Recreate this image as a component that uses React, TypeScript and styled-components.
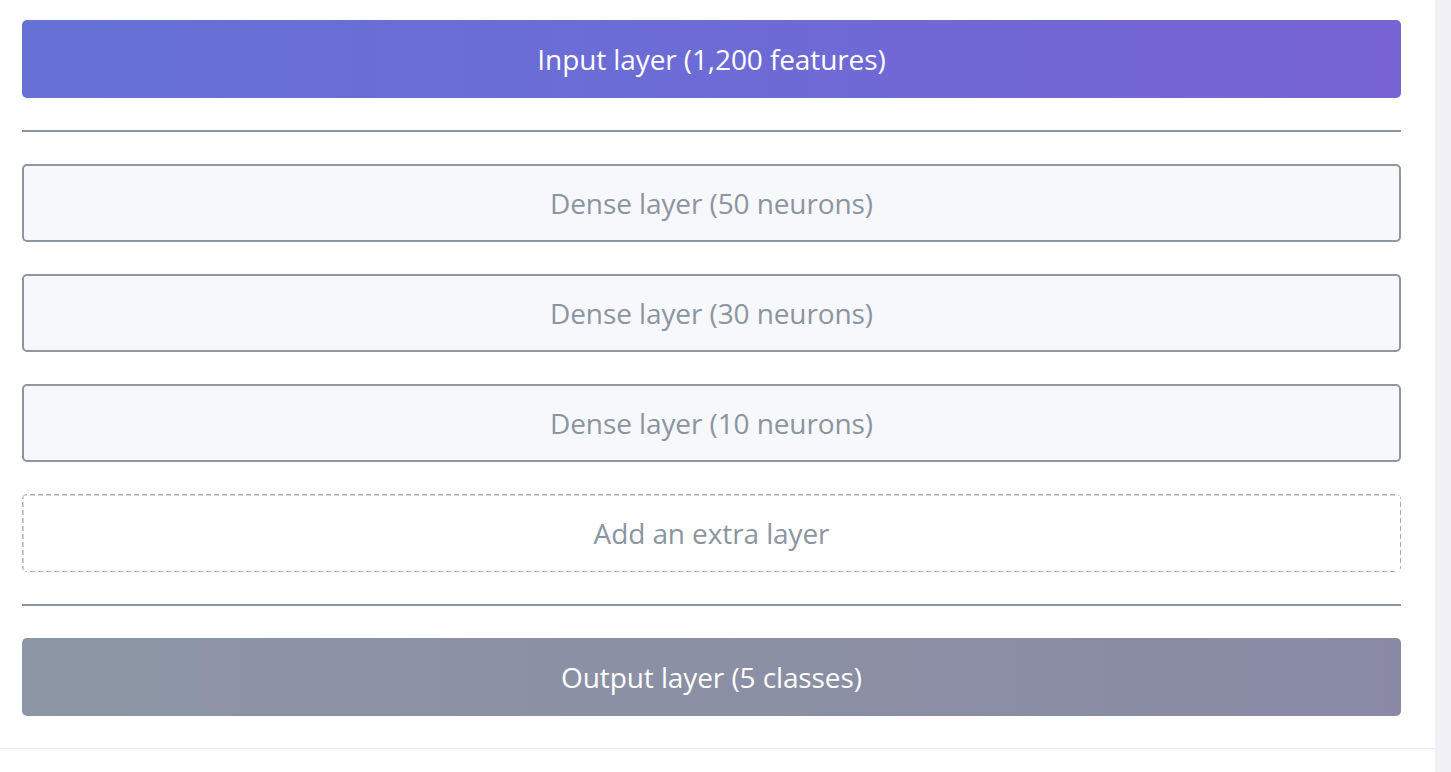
import React from "react";
import styled, { createGlobalStyle, css } from "styled-components";

const GlobalStyle = createGlobalStyle`
  html, body {
    margin: 0;
    padding: 0;
    background: #ffffff;
    font-family: "Open Sans", "Noto Sans", sans-serif;
  }
  #root {
    min-height: 772px;
  }
`;

const Page = styled.div`
  display: flex;
  width: 1451px;
  height: 772px;
  background: #ffffff;
`;

const Main = styled.div`
  flex: 1;
  display: flex;
  flex-direction: column;
`;

const Stack = styled.div`
  display: flex;
  flex-direction: column;
  gap: 32px;
  padding: 20px 34px 32px 22px;
  border-bottom: 1px solid #e6e7ec;
`;

const ScrollTrack = styled.div`
  width: 16px;
  background: #f0f0f6;
`;

type Variant = "input" | "dense" | "extra" | "output";

const dashColor = "#a9aeb4";

const Layer = styled.div<{ $variant: Variant }>`
  height: 78px;
  box-sizing: border-box;
  border-radius: 5px;
  display: flex;
  align-items: center;
  justify-content: center;
  font-size: 28px;
  letter-spacing: -0.1px;
  ${({ $variant }) =>
    $variant === "input"
      ? css`
          background: linear-gradient(90deg, #6571d5 0%, #6d6bd5 50%, #7763d4 100%);
          color: #ffffff;
        `
      : $variant === "output"
      ? css`
          background: linear-gradient(90deg, #8c96a4 0%, #8b90a4 50%, #8a8aa4 100%);
          color: #ffffff;
        `
      : $variant === "dense"
      ? css`
          background: #f7f8fc;
          border: 2px solid #8e979f;
          color: #8b95a0;
        `
      : css`
          background-color: #ffffff;
          background-image: repeating-linear-gradient(90deg, ${dashColor} 0 5px, transparent 5px 8px),
            repeating-linear-gradient(90deg, ${dashColor} 0 5px, transparent 5px 8px),
            repeating-linear-gradient(180deg, ${dashColor} 0 5px, transparent 5px 8px),
            repeating-linear-gradient(180deg, ${dashColor} 0 5px, transparent 5px 8px);
          background-size: 100% 1.5px, 100% 1.5px, 1.5px 100%, 1.5px 100%;
          background-position: 0 0, 0 100%, 0 0, 100% 0;
          background-repeat: no-repeat;
          color: #8b95a0;
        `}
`;

const Divider = styled.hr`
  margin: 0;
  border: none;
  height: 2px;
  background: #8d959e;
`;

export default function App() {
  return (
    <>
      <GlobalStyle />
      <Page>
        <Main>
          <Stack>
            <Layer $variant="input">Input layer (1,200 features)</Layer>
            <Divider />
            <Layer $variant="dense">Dense layer (50 neurons)</Layer>
            <Layer $variant="dense">Dense layer (30 neurons)</Layer>
            <Layer $variant="dense">Dense layer (10 neurons)</Layer>
            <Layer $variant="extra">Add an extra layer</Layer>
            <Divider />
            <Layer $variant="output">Output layer (5 classes)</Layer>
          </Stack>
        </Main>
        <ScrollTrack />
      </Page>
    </>
  );
}
